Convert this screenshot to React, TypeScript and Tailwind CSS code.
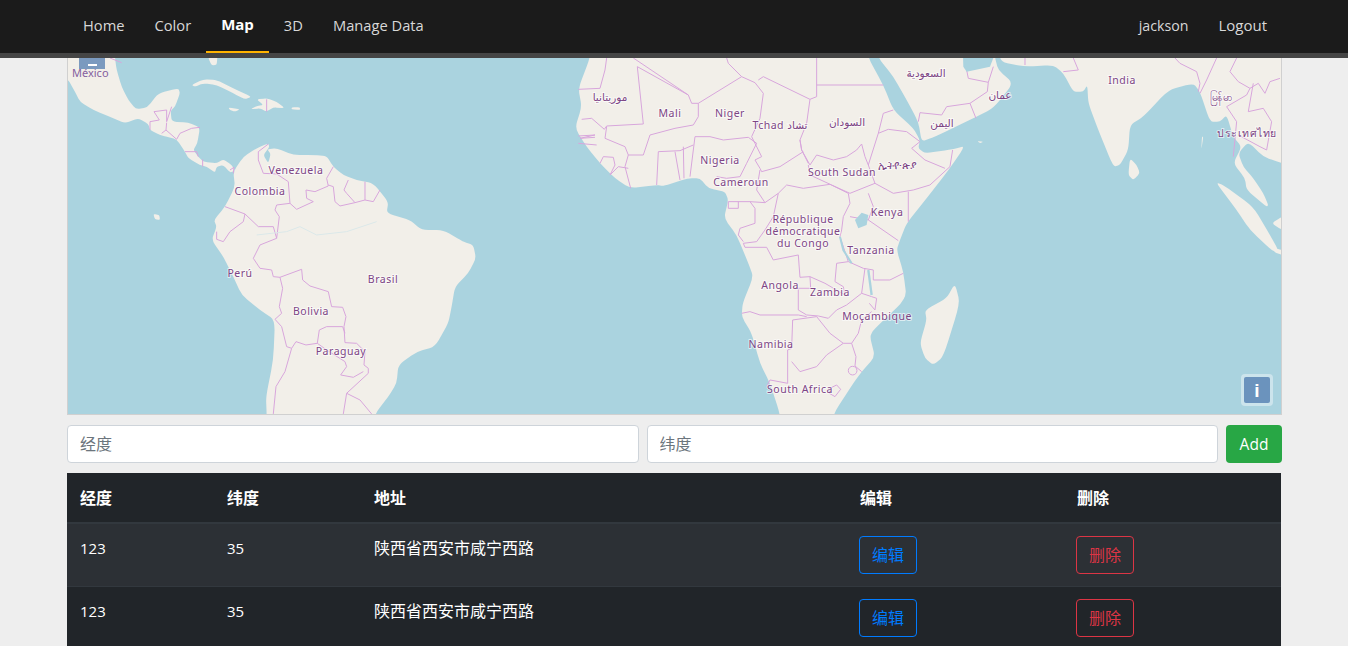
const navItems = ['Home', 'Color', 'Map', '3D', 'Manage Data'];

const rows = [
  { lng: '123', lat: '35', addr: '陕西省西安市咸宁西路' },
  { lng: '123', lat: '35', addr: '陕西省西安市咸宁西路' },
];

// land + borders are written in 3x crop coords, one group per map region
// polygons run past the map edge on purpose, the svg clips them
const americasLand = [
  'M-20,-20 L165,-20 L165,24 L170,60 L185,110 L205,150 L228,178 L262,172 L295,130 L355,115 L360,130 L345,170 L332,182 L335,215 L385,218 L420,232 L412,280 L400,300 L415,320 L430,335 L470,340 L490,328 L515,345 L525,362 L510,368 L490,345 L470,350 L465,368 L440,350 L420,345 L385,325 L375,305 L350,268 L320,260 L300,255 L270,240 L265,222 L235,205 L195,220 L160,205 L100,180 L60,155 L45,125 L22,85 L-20,85 Z',
  'M520,365 L550,320 L590,295 L625,280 L628,292 L610,315 L625,340 L632,312 L622,298 L650,295 L700,315 L760,315 L800,318 L820,350 L850,375 L890,390 L940,400 L985,455 L980,490 L1050,510 L1085,540 L1150,540 L1210,575 L1240,585 L1248,625 L1225,670 L1185,710 L1175,770 L1165,820 L1125,890 L1070,905 L1015,945 L1010,1000 L985,1040 L945,1092 L945,1140 L620,1140 L620,1092 L618,1040 L640,930 L645,810 L600,780 L545,735 L520,680 L490,620 L455,570 L470,530 L462,510 L495,470 L525,410 Z',
  'M395,105 L430,88 L470,90 L530,120 L575,140 L555,148 L520,130 L470,105 L430,100 L405,110 Z',
  'M590,148 L620,145 L650,155 L675,175 L640,172 L620,185 L600,175 L572,178 L590,168 L610,165 Z',
  'M505,172 L540,178 L525,185 L510,180 Z',
  'M695,172 L720,172 L720,180 L695,178 Z',
  'M445,-20 L472,-20 L472,24 L470,45 L455,46 L445,24 Z',
  'M280,492 L298,495 L300,510 L285,508 Z',
];

const americasBorders = [
  'M150,24 L185,38',
  'M270,240 L270,215 L298,210 L282,185 L320,180 L320,215 L335,170',
  'M320,218 L318,240 L305,250',
  'M318,240 L350,268 L360,250 L395,235 L420,232',
  'M375,305 L410,305 L415,320',
  'M428,328 L428,350',
  'M510,360 L522,352 L520,370',
  'M620,148 L620,185',
  'M625,282 L595,305 L595,330 L610,370 L650,372 L685,395 L690,460 L650,465 L645,480 L658,500 L650,565',
  'M690,460 L710,478 L760,455 L740,445 L738,420 L765,425 L805,408 L800,385 L820,350',
  'M805,405 L820,410 L825,455 L840,468 L885,458 L860,430 L852,420 L865,390',
  'M885,458 L915,450 L915,395',
  'M915,450 L940,455 L960,420',
  'M495,470 L555,492 L550,515 L510,545 L490,575 L470,568 L470,545',
  'M555,492 L595,530 L640,530 L650,565 L600,585 L580,625 L600,655 L635,660 L640,680 L660,682 L725,658 L728,690 L750,708 L805,725 L815,770 L848,772 L858,800 L852,830 L855,878 L890,880 L915,905 L912,945 L925,955 L925,970 L860,1030 L850,1092',
  'M660,682 L668,715 L658,770 L665,790 L645,808',
  'M645,808 L665,830 L680,890 L695,895 L708,875 L738,885 L772,880 L778,840 L800,830 L848,830 L855,850',
  'M695,895 L675,965 L648,1010 L640,1092',
  'M772,880 L800,900 L855,935 L860,950 L842,975 L880,982 L910,965',
  'M860,1030 L900,1050 L935,1092',
];

const africaLand = [
  'M90,-20 L90,24 L55,115 L65,170 L45,235 L80,290 L120,340 L165,385 L210,415 L290,405 L310,408 L385,385 L420,385 L445,415 L495,425 L505,450 L492,505 L530,555 L565,640 L580,680 L548,760 L545,800 L575,850 L600,940 L630,1000 L660,1092 L660,1140 L820,1140 L820,1092 L880,1000 L905,965 L945,920 L930,860 L940,840 L1040,745 L1030,665 L1010,600 L1020,570 L1040,520 L1100,445 L1170,355 L1215,288 L1180,298 L1095,310 L1075,295 L1080,270 L1060,235 L1000,180 L970,105 L925,24 L925,-20 Z',
  'M1185,700 L1200,760 L1150,920 L1120,945 L1095,925 L1080,880 L1100,810 L1095,780 L1160,745 Z',
];

const africaBorders = [
  'M140,24 L135,60 L120,115 L55,118',
  'M220,24 L385,135 L395,160 L415,160 L545,80 L505,40 L500,24',
  'M232,50 L250,222 L140,228 L133,238 L95,205 L65,208',
  'M232,50 L385,135',
  'M415,160 L415,200 L400,225 L345,235 L270,255 L250,315 L205,315 L195,290 L135,265 L140,230',
  'M545,80 L585,98 L610,130 L600,205 L575,260',
  'M595,90 L610,80 L750,148 L770,140 L770,24',
  'M750,148 L740,220 L720,270 L725,300 L745,340',
  'M770,105 L970,105',
  'M720,270 L725,300 L750,345 L770,315 L820,330 L860,320 L890,300 L905,282 L915,320 L925,345 L955,250 L970,190 L1000,180',
  'M405,260 L450,260 L490,270 L565,262 L590,280 L560,340 L540,380 L500,385 L470,380',
  'M405,260 L390,380',
  'M575,260 L605,320 L585,330 L600,355 L605,365 L660,350 L730,305',
  'M600,360 L590,420 L615,458',
  'M745,345 L750,375 L815,405 L870,430 L945,400 L1000,430 L1060,420 L1110,405 L1170,350 L1178,300',
  'M925,345 L945,400',
  'M955,250 L985,238 L1040,245 L1080,275 L1055,295 L1095,330 L1155,355',
  'M655,430 L680,405 L730,415 L810,403 L865,430 L870,460 L850,500 L845,540 L840,560 L865,635 L830,640 L825,695 L850,710 L855,735 L795,700 L750,680 L720,682 L715,615 L640,630 L620,592 L555,592 L550,580 L590,575 L615,540 L640,500 L655,430 L615,458 L570,455 L505,455 L505,475 L535,475 L535,455',
  'M570,455 L585,475 L585,520 L540,535 L535,555 L550,575',
  'M925,430 L940,470 L925,510 L1015,572',
  'M1045,425 L1045,515',
  'M870,500 L925,510',
  'M865,635 L910,655 L940,660 L940,690 L990,690 L1030,670',
  'M915,655 L905,730 L935,740 L950,745 L945,780 L928,760',
  'M750,680 L752,715 L715,715 L715,780 L740,795 L775,798 L805,805 L830,780 L860,765 L905,730',
  'M545,790 L570,785 L600,795 L715,795 L740,800',
  'M698,810 L770,800',
  'M698,810 L695,895 L683,900 L683,1000 L630,990 L620,1010',
  'M770,800 L810,850 L850,880 L800,915 L770,950 L720,965 L695,935',
  'M850,880 L875,880 L895,850 L905,810 L935,785',
  'M875,880 L888,920 L885,948 L905,965',
  'M810,1015 L830,1005 L842,1018 L825,1040 L808,1030 Z',
  'M295,305 L290,405',
  'M345,305 L360,390',
  'M370,290 L372,385',
  'M295,305 L360,302 L400,285',
  'M205,315 L195,350 L212,415',
  'M120,340 L130,320 L160,322 L165,345 L150,375 L175,350 L205,355',
  'M55,258 L105,255 L60,265 L105,262',
  'M55,280 L110,285',
];

const asiaLand = [
  'M85,-20 L85,24 L130,80 L170,150 L205,215 L215,275 L250,262 L370,205 L430,175 L490,100 L445,60 L435,24 L435,-20 Z',
  'M450,-20 L450,35 L525,50 L610,45 L640,70 L670,125 L700,125 L712,105 L715,160 L745,240 L790,350 L810,345 L835,300 L840,225 L880,200 L955,120 L1030,100 L1050,125 L1080,215 L1110,215 L1130,195 L1150,260 L1175,290 L1150,340 L1185,385 L1190,420 L1250,470 L1255,465 L1240,430 L1210,385 L1180,350 L1165,310 L1195,275 L1240,320 L1296,340 L1340,340 L1340,-20 Z',
  'M840,325 L860,345 L870,370 L850,390 L835,375 Z',
  'M1098,398 L1120,405 L1210,470 L1260,555 L1285,600 L1270,605 L1200,540 L1160,480 Z',
  'M1265,520 L1296,540 L1340,540 L1340,500 L1296,500 Z',
  'M1275,595 L1296,600 L1340,600 L1340,615 L1296,615 L1272,606 Z',
  'M382,273 L400,275 L390,280 Z',
  'M1056,260 L1060,260 L1054,300 Z',
];

const asiaBorders = [
  'M350,60 L355,85 L415,97 L430,50',
  'M415,97 L412,125 L360,160 L290,170 L275,195 L210,188 L205,215',
  'M360,160 L378,205',
  'M525,24 L525,45',
  'M670,24 L685,60 L640,65',
  'M975,24 L990,40 L1040,65 L1050,100 L1045,125',
  'M1100,24 L1070,90 L1050,130',
  'M1160,24 L1140,65 L1165,95 L1200,115 L1190,135 L1130,170 L1160,215 L1150,320',
  'M1200,115 L1225,100 L1245,130 L1260,95 L1290,85',
  'M1195,185 L1240,175 L1265,215 L1250,300 L1230,290 L1165,255',
  'M1210,100 L1195,185',
];

const labels: [string, number, number][] = [
  ['Venezuela', 296, 170],
  ['Colombia', 260, 191],
  ['Perú', 240, 273],
  ['Brasil', 383, 279],
  ['Bolivia', 311, 311],
  ['Paraguay', 341, 351],
  ['موريتانيا', 610, 97],
  ['Mali', 670, 113],
  ['Niger', 730, 113],
  ['Tchad تشاد', 780, 125],
  ['السودان', 847, 122],
  ['Nigeria', 720, 160],
  ['Cameroun', 741, 182],
  ['South Sudan', 842, 172],
  ['ኢትዮጵያ', 898, 165],
  ['Kenya', 887, 212],
  ['République', 803, 219],
  ['démocratique', 803, 231],
  ['du Congo', 803, 243],
  ['Tanzania', 871, 250],
  ['Angola', 780, 285],
  ['Zambia', 830, 292],
  ['Moçambique', 877, 316],
  ['Namibia', 771, 344],
  ['South Africa', 800, 389],
  ['السعودية', 926, 73],
  ['اليمن', 942, 123],
  ['عمان', 1000, 95],
  ['India', 1122, 80],
  ['မြန်မာ', 1221, 97],
  ['ประเทศไทย', 1247, 133],
];

// rounds the corners of a closed polygon so coasts don't look cut with scissors
function roundCoast(d: string) {
  const pts = d.match(/-?\d+,-?\d+/g)!.map((p) => p.split(',').map(Number));
  const n = pts.length;
  let out = '';
  pts.forEach((v, i) => {
    const p = pts[(i + n - 1) % n];
    const q = pts[(i + 1) % n];
    const ax = v[0] + (p[0] - v[0]) * 0.3;
    const ay = v[1] + (p[1] - v[1]) * 0.3;
    const bx = v[0] + (q[0] - v[0]) * 0.3;
    const by = v[1] + (q[1] - v[1]) * 0.3;
    out += `${i === 0 ? 'M' : 'L'}${ax},${ay} Q${v[0]},${v[1]} ${bx},${by} `;
  });
  return out + 'Z';
}

function Region({ x, y, land, borders }: { x: number; y: number; land: string[]; borders: string[] }) {
  return (
    <g transform={`translate(${x} ${y}) scale(0.3333)`}>
      {land.map((d, i) => (
        <path key={i} d={roundCoast(d)} fill="#f2efe9" />
      ))}
      {borders.map((d, i) => (
        <path key={i} d={d} fill="none" stroke="#d8a6dc" strokeWidth="3" strokeLinejoin="round" />
      ))}
    </g>
  );
}

function WorldMap() {
  return (
    <svg viewBox="68 58 1213 356" className="block h-full w-full">
      <rect x="68" y="58" width="1213" height="356" fill="#aad3df" />
      <Region x={60} y={50} land={americasLand} borders={americasBorders} />
      <Region x={560} y={50} land={africaLand} borders={africaBorders} />
      <Region x={850} y={50} land={asiaLand} borders={asiaBorders} />
      <g transform="translate(60 50) scale(0.3333)">
        <path d="M590,555 L680,545 L720,530 L770,555 L860,545 L950,515" fill="none" stroke="#dbe8ea" strokeWidth="3" />
      </g>
      <g transform="translate(560 50) scale(0.3333)">
        <path d="M840,560 L850,600 L875,640" fill="none" stroke="#aad3df" strokeWidth="6" />
        <path d="M925,660 L935,735" fill="none" stroke="#aad3df" strokeWidth="7" />
        <path d="M885,510 L905,488 L925,495 L920,525 L895,535 Z" fill="#aad3df" />
        <circle cx="878" cy="962" r="13" fill="none" stroke="#d8a6dc" strokeWidth="3" />
      </g>
      <g transform="translate(850 50) scale(0.3333)">
        <path d="M338,-20 L430,-20 L430,24 L420,50 L350,65 L340,50 Z" fill="#aad3df" />
      </g>
      {labels.map(([text, x, y]) => (
        <text
          key={text}
          x={x}
          y={y + 4}
          textAnchor="middle"
          fontSize="10.5"
          letterSpacing="0.5"
          fontFamily="'Noto Sans', 'DejaVu Sans', sans-serif"
          fill="#7d4585"
          stroke="#ffffff"
          strokeOpacity="0.6"
          strokeWidth="2"
          paintOrder="stroke"
        >
          {text}
        </text>
      ))}
    </svg>
  );
}

export default function App() {
  return (
    <div className="h-[646px] overflow-hidden bg-[#eeeeee] font-['Open_Sans','Noto_Sans_CJK_SC',sans-serif] text-[15px]">
      <nav className="flex h-[58px] justify-between border-b-[5px] border-[#454545] bg-[#1b1b1b] pl-[68px] pr-[66px]">
        <ul className="flex text-[14.7px]">
          {navItems.map((item) =>
            item === 'Map' ? (
              <li key={item} className="flex h-[53px] items-center border-b-2 border-[#ffb300] px-[15px] pb-[2px] text-[15px] font-bold text-white">
                {item}
              </li>
            ) : (
              <li key={item} className="flex h-[53px] items-center px-[15px] pb-[2px] text-[#d8d8d8]">
                {item}
              </li>
            ),
          )}
        </ul>
        <ul className="flex">
          <li className="flex h-[53px] items-center px-[15px] pb-[2px] text-[14.2px] text-[#d8d8d8]">jackson</li>
          <li className="flex h-[53px] items-center px-[15px] pb-[2px] text-[15px] text-[#d8d8d8]">Logout</li>
        </ul>
      </nav>

      <main className="ml-[67px] w-[1215px]">
        <div className="relative h-[357px] w-[1215px] border-x border-b border-[#d0d0d0]">
          <WorldMap />
          <div className="absolute left-[11px] top-0 flex h-[11px] w-[26px] justify-center bg-[#7b9abf] pt-[6px]">
            <div className="h-[2px] w-[9px] bg-white"></div>
          </div>
          <span className="absolute left-[4px] top-[8px] font-['Noto_Sans',sans-serif] text-[11px] leading-[13px] text-[#85609f]">México</span>
          <div className="absolute bottom-[8px] right-[8px] h-[32px] w-[32px] rounded-[4px] bg-white/40 p-[3px]">
            <div className="flex h-[26px] w-[26px] items-center justify-center rounded-[2px] bg-[#6b93bd] font-['Liberation_Sans',sans-serif] text-[19px] font-bold leading-none text-white">
              i
            </div>
          </div>
        </div>

        <form className="mt-[10px] flex gap-2">
          <input
            placeholder="经度"
            className="h-[38px] min-w-0 flex-1 rounded border border-[#ced4da] bg-white px-3 text-[16px] placeholder:text-[#6c757d]"
          />
          <input
            placeholder="纬度"
            className="h-[38px] min-w-0 flex-1 rounded border border-[#ced4da] bg-white px-3 text-[16px] placeholder:text-[#6c757d]"
          />
          <button type="button" className="h-[38px] w-[56px] rounded bg-[#28a745] pt-[1px] text-[15.5px] text-white">
            Add
          </button>
        </form>

        <table className="mt-[10px] w-[1214px] table-fixed border-collapse bg-[#212529] text-white">
          <colgroup>
            <col className="w-[147px]" />
            <col className="w-[147px]" />
            <col className="w-[486px]" />
            <col className="w-[217px]" />
            <col />
          </colgroup>
          <thead>
            <tr className="border-b-2 border-[#32383e] text-left text-[16px]">
              <th className="h-[50px] px-[13px] font-bold">经度</th>
              <th className="px-[13px] font-bold">纬度</th>
              <th className="px-[13px] font-bold">地址</th>
              <th className="px-[13px] font-bold">编辑</th>
              <th className="px-[13px] font-bold">删除</th>
            </tr>
          </thead>
          <tbody>
            {rows.map((row, i) => (
              <tr key={i} className={i % 2 === 0 ? 'border-t border-[#32383e] bg-[#2c3035]' : 'border-t border-[#32383e]'}>
                <td className="px-[13px] py-3 align-top leading-6">{row.lng}</td>
                <td className="px-[13px] py-3 align-top leading-6">{row.lat}</td>
                <td className="px-[13px] py-3 align-top text-[16px] leading-6">{row.addr}</td>
                <td className="p-3 align-top">
                  <button type="button" className="h-[38px] w-[58px] rounded border border-[#007bff] text-[16px] text-[#007bff]">
                    编辑
                  </button>
                </td>
                <td className="p-3 align-top">
                  <button type="button" className="h-[38px] w-[58px] rounded border border-[#dc3545] text-[16px] text-[#dc3545]">
                    删除
                  </button>
                </td>
              </tr>
            ))}
          </tbody>
        </table>
      </main>
    </div>
  );
}
